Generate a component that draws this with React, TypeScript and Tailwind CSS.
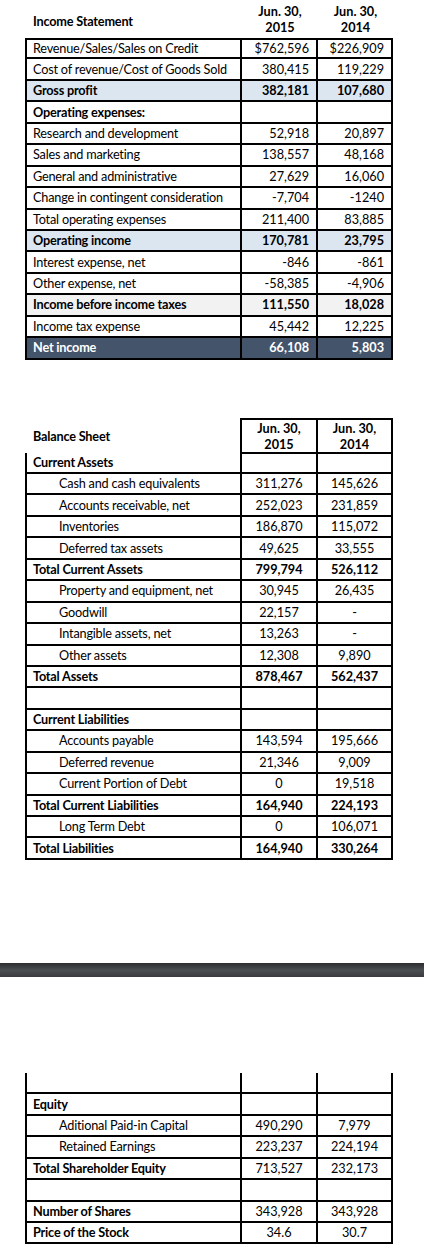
import React from "react";

type RowProps = {
  label?: string;
  a?: string;
  b?: string;
  bold?: boolean;
  boldValues?: boolean;
  indent?: boolean;
  center?: boolean;
  bg?: string;
  top?: boolean;
  dark?: boolean;
};

const font = { fontFamily: "Lato, 'Open Sans', sans-serif" };

function Row({ label, a, b, bold, boldValues, indent, center, bg = "", top, dark }: RowProps) {
  const t = top ? "border-t-2" : "";
  const txt = dark ? "text-white" : "text-black";
  const vb = boldValues ?? bold;
  const val = `flex h-[21.45px] items-center border-r-2 border-b-2 border-black tracking-normal ${t} ${bg} ${txt} ${
    center ? "justify-center" : "justify-end pr-[7px]"
  } ${vb ? "font-bold" : ""}`;
  return (
    <div className="grid grid-cols-[217px_76px_75px]">
      <div
        className={`flex h-[21.45px] items-center border-x-2 border-b-2 border-black ${t} ${bg} ${txt} ${
          indent ? "pl-[32px]" : "pl-[6px]"
        } ${bold ? "font-bold" : ""}`}
      >
        {label}
      </div>
      <div className={val}>{a}</div>
      <div className={val}>{b}</div>
    </div>
  );
}

function DateHead({ year }: { year: string }) {
  return (
    <div className="flex flex-col items-center justify-center font-bold leading-[16px] tracking-normal">
      <span>Jun. 30,</span>
      <span>{year}</span>
    </div>
  );
}

export default function App() {
  return (
    <div className="min-h-[1258px] bg-white text-[12.7px] tracking-[-0.2px] text-black" style={font}>
      {/* Income statement */}
      <div className="pl-[25px]">
        <div className="grid h-[38px] grid-cols-[217px_76px_75px]">
          <div className="flex items-center pl-[8px] pt-[6px] font-bold">Income Statement</div>
          <DateHead year="2015" />
          <DateHead year="2014" />
        </div>
        <Row label="Revenue/Sales/Sales on Credit" a="$762,596" b="$226,909" top />
        <Row label="Cost of revenue/Cost of Goods Sold" a="380,415" b="119,229" />
        <Row label="Gross profit" a="382,181" b="107,680" bold bg="bg-[#dce6f1]" />
        <Row label="Operating expenses:" bold />
        <Row label="Research and development" a="52,918" b="20,897" />
        <Row label="Sales and marketing" a="138,557" b="48,168" />
        <Row label="General and administrative" a="27,629" b="16,060" />
        <Row label="Change in contingent consideration" a="-7,704" b="-1240" />
        <Row label="Total operating expenses" a="211,400" b="83,885" />
        <Row label="Operating income" a="170,781" b="23,795" bold bg="bg-[#dce6f1]" />
        <Row label="Interest expense, net" a="-846" b="-861" />
        <Row label="Other expense, net" a="-58,385" b="-4,906" />
        <Row label="Income before income taxes" a="111,550" b="18,028" bold bg="bg-[#f2f2f2]" />
        <Row label="Income tax expense" a="45,442" b="12,225" />
        <Row label="Net income" a="66,108" b="5,803" bold dark bg="bg-[#44546a]" />
      </div>

      {/* Balance sheet */}
      <div className="mt-[58px] pl-[25px]">
        <div className="grid h-[35px] grid-cols-[217px_76px_75px]">
          <div className="flex items-center border-r-2 border-black pl-[8px] pt-[2px] font-bold">Balance Sheet</div>
          <div className="flex items-center justify-center border-y-2 border-r-2 border-black">
            <DateHead year="2015" />
          </div>
          <div className="flex items-center justify-center border-y-2 border-r-2 border-black">
            <DateHead year="2014" />
          </div>
        </div>
        <Row label="Current Assets" bold center />
        <Row label="Cash and cash equivalents" a="311,276" b="145,626" indent center />
        <Row label="Accounts receivable, net" a="252,023" b="231,859" indent center />
        <Row label="Inventories" a="186,870" b="115,072" indent center />
        <Row label="Deferred tax assets" a="49,625" b="33,555" indent center />
        <Row label="Total Current Assets" a="799,794" b="526,112" bold center />
        <Row label="Property and equipment, net" a="30,945" b="26,435" indent center />
        <Row label="Goodwill" a="22,157" b="-" indent center />
        <Row label="Intangible assets, net" a="13,263" b="-" indent center />
        <Row label="Other assets" a="12,308" b="9,890" indent center />
        <Row label="Total Assets" a="878,467" b="562,437" bold center />
        <Row center />
        <Row label="Current Liabilities" bold center />
        <Row label="Accounts payable" a="143,594" b="195,666" indent center />
        <Row label="Deferred revenue" a="21,346" b="9,009" indent center />
        <Row label="Current Portion of Debt" a="0" b="19,518" indent center />
        <Row label="Total Current Liabilities" a="164,940" b="224,193" bold center />
        <Row label="Long Term Debt" a="0" b="106,071" indent center />
        <Row label="Total Liabilities" a="164,940" b="330,264" bold center />
      </div>

      {/* page break bar */}
      <div className="mt-[103px] h-[14px] w-full bg-linear-to-b from-[#2c2d2f] via-[#4c4f53] to-[#3a3b3e]" />

      {/* Equity */}
      <div className="mt-[96px] pl-[25px]">
        <Row center />
        <Row label="Equity" bold center />
        <Row label="Aditional Paid-in Capital" a="490,290" b="7,979" indent center />
        <Row label="Retained Earnings" a="223,237" b="224,194" indent center />
        <Row label="Total Shareholder Equity" a="713,527" b="232,173" bold boldValues={false} center />
        <Row center />
        <Row label="Number of Shares" a="343,928" b="343,928" bold boldValues={false} center />
        <Row label="Price of the Stock" a="34.6" b="30.7" bold boldValues={false} center />
      </div>
    </div>
  );
}
